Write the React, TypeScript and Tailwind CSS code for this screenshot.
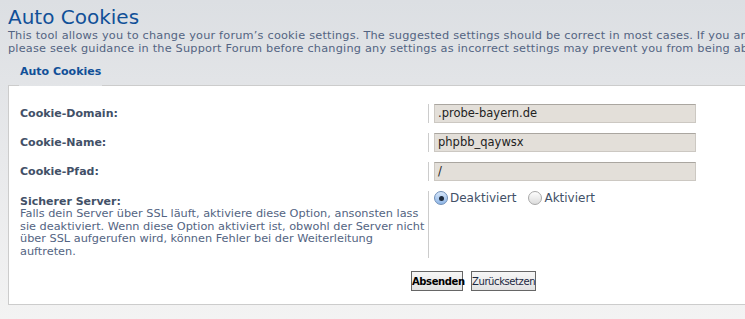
import React from "react";

interface Field {
  label: string;
  value: string;
}

const fields: Field[] = [
  { label: "Cookie-Domain:", value: ".probe-bayern.de" },
  { label: "Cookie-Name:", value: "phpbb_qaywsx" },
  { label: "Cookie-Pfad:", value: "/" },
];

const Radio = ({ checked, label }: { checked?: boolean; label: string }) => (
  <label className="flex items-center gap-[2px]">
    <span
      className={
        checked
          ? "flex h-[14px] w-[14px] items-center justify-center rounded-full border border-[#6f8fb8] bg-gradient-to-b from-[#d6e6fa] to-[#8fb6e6]"
          : "flex h-[14px] w-[14px] items-center justify-center rounded-full border border-[#a8a8a8] bg-gradient-to-b from-[#fdfdfd] to-[#dcdcdc]"
      }
    >
      {checked && <span className="h-[5px] w-[5px] rounded-full bg-[#1d2a3c]" />}
    </span>
    <span className="text-[12px] leading-[14px] text-[#425067]">{label}</span>
  </label>
);

const App = () => {
  return (
    <div className="h-[319px] w-[745px] overflow-hidden bg-gradient-to-b from-[#dcdfe3] via-[#e8e9eb] to-[#f3f3f3] font-['DejaVu_Sans',sans-serif]">
      <div className="w-[947px] px-2">
        <h1 className="pt-[5px] text-[20px] leading-[24px] text-[#115098]">Auto Cookies</h1>
        <p className="whitespace-nowrap text-[11.3px] leading-[13px] tracking-[0.2px] text-[#536482]">
          This tool allows you to change your forum’s cookie settings. The suggested settings should be correct in most cases. If you are unsure about the settings
          <br />
          please seek guidance in the Support Forum before changing any settings as incorrect settings may prevent you from being able to log in.
        </p>

        <fieldset className="mt-[10px] border border-[#cccccc] bg-transparent">
          <legend className="-mb-[20px] ml-[10px] px-[1px] pb-[27px] text-[11px] font-bold leading-[14px] text-[#115098]">
            Auto Cookies
          </legend>

          <div className="bg-white">
            <div className="flex flex-col gap-[10px] pt-[18px]">
              {fields.map((f) => (
                <div key={f.label} className="grid grid-cols-[419px_1fr]">
                  <div className="pl-[11px] pt-[3px] text-[11px] font-bold leading-[13px] text-[#425067]">
                    {f.label}
                  </div>
                  <div className="border-l border-[#cccccc] pl-[5px]">
                    <div className="flex h-[19px] w-[262px] items-center border border-[#ccc8c2] border-t-[#aaa6a0] bg-[#e3dfd9] px-[3px] text-[11.5px] text-[#222]">
                      {f.value}
                    </div>
                  </div>
                </div>
              ))}

              <div className="grid grid-cols-[419px_1fr]">
                <div className="pl-[11px] pt-[4px] text-[11.3px] leading-[12.6px] text-[#536482]">
                  <div className="text-[11px] font-bold leading-[13px] text-[#425067]">Sicherer Server:</div>
                  <div className="whitespace-nowrap">
                    Falls dein Server über SSL läuft, aktiviere diese Option, ansonsten lass
                    <br />
                    sie deaktiviert. Wenn diese Option aktiviert ist, obwohl der Server nicht
                    <br />
                    über SSL aufgerufen wird, können Fehler bei der Weiterleitung
                    <br />
                    auftreten.
                  </div>
                </div>
                <div className="border-l border-[#cccccc] pl-[5px]">
                  <div className="flex items-center gap-[12px]">
                    <Radio checked label="Deaktiviert" />
                    <Radio label="Aktiviert" />
                  </div>
                </div>
              </div>
            </div>

            <div className="flex justify-center gap-[8px] pb-[13px] pt-[13px]">
              <button className="h-[20px] w-[52px] border border-[#666] bg-gradient-to-b from-[#f6f6f6] to-[#e2e2e2] px-0 text-[10px] font-bold tracking-[-0.4px] text-black">
                Absenden
              </button>
              <button className="h-[20px] w-[65px] border border-[#666] bg-gradient-to-b from-[#f6f6f6] to-[#e2e2e2] px-0 text-[10px] tracking-[-0.4px] text-[#1a2740]">
                Zurücksetzen
              </button>
            </div>
          </div>
        </fieldset>
      </div>
    </div>
  );
};

export default App;
